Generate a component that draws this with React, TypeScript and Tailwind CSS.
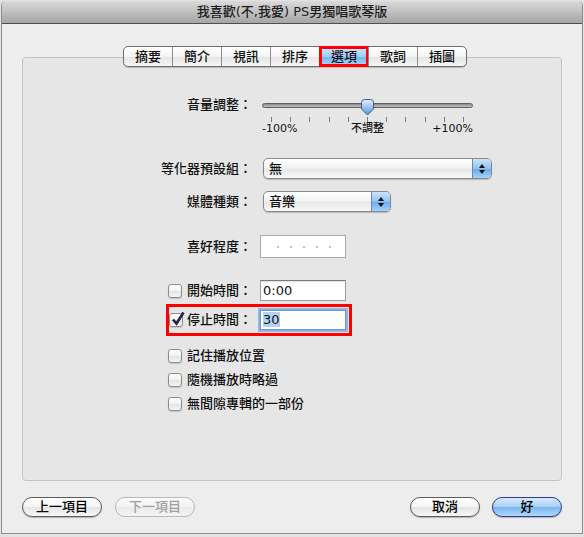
import type { ReactNode } from 'react';

const TABS = ['摘要', '簡介', '視訊', '排序', '選項', '歌詞', '插圖'];
const SELECTED_TAB = '選項';

export default function App() {
  return (
    <div className="h-[537px] w-[584px] bg-[#e2e2e2] pl-[1px] pt-[1px] font-['DejaVu_Sans','Noto_Sans_CJK_TC',sans-serif] text-[13px] font-medium leading-[16px] text-[#111]">
      <div className="flex h-[533px] w-[582px] flex-col rounded-t-[5px] border-x border-b border-[#8f8f8f] bg-[#ededed]">
        <div className="flex h-[23px] shrink-0 items-center justify-center rounded-t-[5px] border-b border-[#4f4f4f] bg-[linear-gradient(#dadada,#a5a5a5)] text-[#1c1c1c]">
          我喜歡(不,我愛) PS男獨唱歌琴版
        </div>
        <div className="flex flex-1 flex-col px-[20px] pt-[22px]">
          <TabBar />
          <div className="-mt-[10px] h-[424px] rounded-[4px] border border-[#c3c3c3] bg-[#e6e6e6] pt-[39px]">
            <div className="flex items-start">
              <Label>音量調整：</Label>
              <div className="ml-[10px]">
                <VolumeSlider />
              </div>
            </div>
            <div className="mt-[23px] flex h-[21px] items-center">
              <Label>等化器預設組：</Label>
              <PopUp className="ml-[11px] w-[229px]" value="無" />
            </div>
            <div className="mt-[12px] flex h-[21px] items-center">
              <Label>媒體種類：</Label>
              <PopUp className="ml-[11px] w-[128px]" value="音樂" />
            </div>
            <div className="mt-[23px] flex h-[23px] items-center">
              <Label>喜好程度：</Label>
              <Rating />
            </div>
            <div className="mt-[22px] flex h-[21px] items-center">
              <div className="flex w-[229px] items-center justify-end gap-[5px]">
                <CheckBox />
                <span>開始時間：</span>
              </div>
              <div className="ml-[8px] h-[21px] w-[86px] border border-[#9c9c9c] border-t-[#7a7a7a] bg-white pl-[2px] leading-[19px] shadow-[inset_0_1px_1px_rgba(0,0,0,0.12)]">
                0:00
              </div>
            </div>
            {/* red annotation box around the edited row */}
            <div className="ml-[143px] mt-[3px] flex h-[32px] w-[186px] items-center border-[3px] border-[#ff0000]">
              <CheckBox checked />
              <span className="ml-[4px]">停止時間：</span>
              <div className="ml-[8px] h-[20px] w-[86px] border border-[#6f93c4] bg-white pl-[2px] leading-[18px] shadow-[0_0_0_2px_#8fb5e4]">
                <span className="bg-[#b4d2f5]">30</span>
              </div>
            </div>
            <div className="mt-[8px] pl-[145px]">
              <CheckRow>記住播放位置</CheckRow>
              <CheckRow>隨機播放時略過</CheckRow>
              <CheckRow>無間隙專輯的一部份</CheckRow>
            </div>
          </div>
          <div className="mt-[16px] flex items-center">
            <PushButton className="w-[80px]">上一項目</PushButton>
            <PushButton className="ml-[13px] w-[80px]" disabled>
              下一項目
            </PushButton>
            <PushButton className="ml-auto w-[70px]">取消</PushButton>
            <PushButton className="ml-[12px] w-[70px]" primary>
              好
            </PushButton>
          </div>
        </div>
      </div>
    </div>
  );
}

function TabBar() {
  return (
    <div className="relative z-10 ml-[101px] flex h-[21px] w-[344px] shrink-0 rounded-[5px] border border-[#6f6f6f] bg-[linear-gradient(#ffffff,#f4f4f4_50%,#e4e4e4_51%,#f6f6f6)] shadow-[0_1px_1px_rgba(0,0,0,0.2)]">
      {TABS.map((t, i) => {
        const on = t === SELECTED_TAB;
        return (
          <div
            key={t}
            className={
              'relative flex flex-1 items-center justify-center ' +
              (i > 0 ? 'border-l border-[#8d8d8d] ' : '') +
              (on ? 'bg-[linear-gradient(#d2e8fd,#a0ccf6_50%,#78b3ef_51%,#a6d5fb)]' : '')
            }
          >
            {t}
            {on && (
              <span className="absolute -inset-y-[1px] -left-[1px] -right-[1px] border-[3px] border-[#ff0000]" />
            )}
          </div>
        );
      })}
    </div>
  );
}

function Label({ children }: { children: ReactNode }) {
  return <span className="w-[229px] shrink-0 text-right">{children}</span>;
}

function VolumeSlider() {
  return (
    <div className="w-[211px]">
      <div className="relative h-[16px]">
        <div className="absolute inset-x-0 top-[6px] h-[5px] rounded-full border border-[#5f5f5f] bg-[linear-gradient(#888888,#c4c4c4)]" />
        <svg className="absolute left-[98px] top-[2px]" width="15" height="17" viewBox="0 0 15 17">
          <defs>
            <linearGradient id="thumb" x1="0" y1="0" x2="0" y2="1">
              <stop offset="0" stopColor="#e8f1fc" />
              <stop offset="0.5" stopColor="#9cc3f0" />
              <stop offset="1" stopColor="#5b93de" />
            </linearGradient>
          </defs>
          <path
            d="M1.5 3.5 Q1.5 0.5 4.5 0.5 L10.5 0.5 Q13.5 0.5 13.5 3.5 L13.5 10 L7.5 16 L1.5 10 Z"
            fill="url(#thumb)"
            stroke="#3f5c8e"
          />
        </svg>
      </div>
      <div className="mt-[4px] flex h-[5px] justify-between px-[9px]">
        {Array.from({ length: 11 }).map((_, i) => (
          <span key={i} className="w-px bg-[#7a7a7a]" />
        ))}
      </div>
      <div className="grid grid-cols-3 text-[11px] leading-[13px]">
        <span>-100%</span>
        <span className="text-center">不調整</span>
        <span className="text-right">+100%</span>
      </div>
    </div>
  );
}

function PopUp({ value, className }: { value: string; className: string }) {
  return (
    <div
      className={
        'flex h-[21px] items-stretch rounded-[5px] border border-[#8a8a8a] bg-[linear-gradient(#ffffff,#f4f4f4_45%,#e7e7e7_55%,#f8f8f8)] shadow-[0_1px_1px_rgba(0,0,0,0.2)] ' +
        className
      }
    >
      <span className="flex-1 pl-[5px] leading-[19px]">{value}</span>
      <span className="flex w-[19px] flex-col items-center justify-center gap-[2px] rounded-r-[4px] border-l border-[#6f86b6] bg-[linear-gradient(#cde3fb,#92c1f2_50%,#6aa8ec_51%,#a2d2fb)]">
        <svg width="6" height="4" viewBox="0 0 6 4">
          <path d="M0 4 L3 0 L6 4 Z" fill="#111" />
        </svg>
        <svg width="6" height="4" viewBox="0 0 6 4">
          <path d="M0 0 L3 4 L6 0 Z" fill="#111" />
        </svg>
      </span>
    </div>
  );
}

function Rating() {
  return (
    <div className="ml-[8px] flex h-[23px] w-[86px] items-center gap-[11px] border border-[#a9a9a9] bg-white pl-[16px]">
      {Array.from({ length: 5 }).map((_, i) => (
        <span key={i} className="h-[2px] w-[2px] bg-[#c2c2c2]" />
      ))}
    </div>
  );
}

function CheckBox({ checked }: { checked?: boolean }) {
  return (
    <span className="relative block h-[14px] w-[14px] shrink-0 rounded-[3px] border border-[#8c8c8c] bg-[linear-gradient(#ffffff,#f1f1f1_50%,#e3e3e3_51%,#f5f5f5)] shadow-[0_1px_1px_rgba(0,0,0,0.15)]">
      {checked && (
        <svg className="absolute -top-[3px] left-[1px]" width="14" height="15" viewBox="0 0 14 15">
          <path d="M2 8.5 L5.5 12.5 L12.5 1.5" fill="none" stroke="#1d2748" strokeWidth="2.6" />
        </svg>
      )}
    </span>
  );
}

function CheckRow({ children }: { children: ReactNode }) {
  return (
    <div className="flex h-[24px] items-center gap-[5px]">
      <CheckBox />
      <span>{children}</span>
    </div>
  );
}

function PushButton({
  children,
  className,
  disabled,
  primary,
}: {
  children: ReactNode;
  className: string;
  disabled?: boolean;
  primary?: boolean;
}) {
  const tone = primary
    ? 'border-[#30398a] bg-[linear-gradient(#d6eafd,#a8d0f7_50%,#7ab5f0_51%,#abd9fc)] text-black'
    : disabled
      ? 'border-[#b9b9b9] bg-[linear-gradient(#fbfbfb,#f2f2f2_50%,#eaeaea_51%,#f4f4f4)] text-[#a0a0a0] shadow-none'
      : 'border-[#5c5c5c] bg-[linear-gradient(#ffffff,#f4f4f4_50%,#e5e5e5_51%,#f7f7f7)] text-black';
  return (
    <button
      type="button"
      disabled={disabled}
      className={
        'flex h-[20px] items-center justify-center rounded-full border text-[13px] leading-[16px] shadow-[0_1px_1px_rgba(0,0,0,0.25)] ' +
        tone +
        ' ' +
        className
      }
    >
      {children}
    </button>
  );
}
